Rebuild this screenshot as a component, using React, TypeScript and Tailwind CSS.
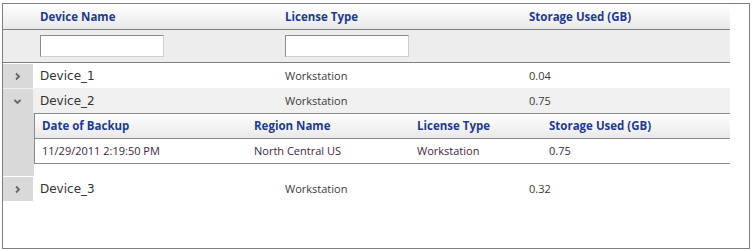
import React from 'react';

const devices = [
    { name: 'Device_1', license: 'Workstation', storage: '0.04', open: false },
    { name: 'Device_2', license: 'Workstation', storage: '0.75', open: true },
    { name: 'Device_3', license: 'Workstation', storage: '0.32', open: false },
];

const backups = [
    { date: '11/29/2011 2:19:50 PM', region: 'North Central US', license: 'Workstation', storage: '0.75' },
];

const segoe = "font-['Open_Sans',sans-serif]";
const headerBg = 'bg-[linear-gradient(to_bottom,#ffffff,#e9e9e9)]';

const Chevron = ({ open }: { open: boolean }) => (
    <svg width="9" height="9" viewBox="0 0 9 9" className="block">
        {open ? (
            <path d="M1.5 3 L4.5 6 L7.5 3" fill="none" stroke="#666" strokeWidth="1.8" />
        ) : (
            <path d="M3 1.5 L6 4.5 L3 7.5" fill="none" stroke="#666" strokeWidth="1.8" />
        )}
    </svg>
);

const FilterInput = () => (
    <div className="w-[124px] h-[22px] bg-white border border-t-[#8c8c8c] border-l-[#8c8c8c] border-r-[#cfcfcf] border-b-[#cfcfcf]" />
);

const DeviceRow = ({ d, shaded }: { d: typeof devices[number]; shaded: boolean }) => (
    <div className={`flex h-[25px] items-center pt-[1px] ${shaded ? 'bg-[#f0f0f0]' : 'bg-white'}`}>
        <div className="w-[30px] h-full bg-[#d9d9d9] flex items-center justify-center pr-[1px]">
            <Chevron open={d.open} />
        </div>
        <div className="w-[245px] pl-[7px] text-[12px] text-[#333] font-['DejaVu_Sans',sans-serif]">{d.name}</div>
        <div className={`w-[244px] pl-[7px] text-[11px] text-[#3a3a3a] ${segoe}`}>{d.license}</div>
        <div className={`flex-1 pl-[7px] text-[11px] text-[#3a3a3a] ${segoe}`}>{d.storage}</div>
    </div>
);

const BackupDetail = () => (
    <div className="flex bg-white">
        <div className="w-[31px] bg-[#d9d9d9]" />
        <div className="flex-1 pb-[12px]">
            <div className={`border-l border-t border-b border-[#8a8a8a] ${segoe}`}>
                <div className={`flex h-[25px] items-center border-b border-[#8a8a8a] ${headerBg} text-[11.5px] font-bold text-[#1d3b8c]`}>
                    <div className="w-[212px] pl-[7px]">Date of Backup</div>
                    <div className="w-[163px] pl-[7px]">Region Name</div>
                    <div className="w-[132px] pl-[7px]">License Type</div>
                    <div className="flex-1 pl-[7px]">Storage Used (GB)</div>
                </div>
                {backups.map(b => (
                    <div key={b.date} className="flex h-[24px] items-center text-[11px] text-[#3d2640]">
                        <div className="w-[212px] pl-[7px]">{b.date}</div>
                        <div className="w-[163px] pl-[7px]">{b.region}</div>
                        <div className="w-[132px] pl-[7px]">{b.license}</div>
                        <div className="flex-1 pl-[7px]">{b.storage}</div>
                    </div>
                ))}
            </div>
        </div>
    </div>
);

export default function App() {
    return (
        <div className="w-[752px] h-[249px] bg-white pt-[3px] pl-[2px]">
            <div className="w-[748px] h-[246px] border border-[#7f7f7f] bg-white">
                <div className="w-[727px]">
                    <div className={`flex h-[26px] items-center pt-[1px] border-b border-[#7f7f7f] ${headerBg} ${segoe} text-[11.5px] font-bold text-[#1d3b8c]`}>
                        <div className="w-[30px]" />
                        <div className="w-[245px] pl-[7px]">Device Name</div>
                        <div className="w-[244px] pl-[7px]">License Type</div>
                        <div className="flex-1 pl-[7px]">Storage Used (GB)</div>
                    </div>
                    <div className="flex h-[33px] items-center border-b border-[#7f7f7f] bg-[#ededed]">
                        <div className="w-[30px]" />
                        <div className="w-[245px] pl-[7px]"><FilterInput /></div>
                        <div className="w-[244px] pl-[7px]"><FilterInput /></div>
                        <div className="flex-1" />
                    </div>
                    {devices.map((d, i) => (
                        <React.Fragment key={d.name}>
                            <DeviceRow d={d} shaded={i === 1} />
                            {d.open && <BackupDetail />}
                        </React.Fragment>
                    ))}
                </div>
            </div>
        </div>
    );
}
